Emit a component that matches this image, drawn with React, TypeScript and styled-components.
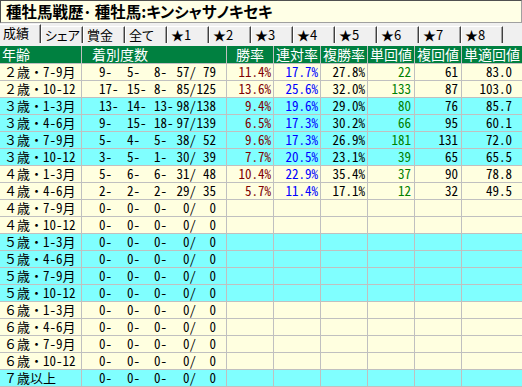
import styled, { createGlobalStyle } from "styled-components";

const GlobalStyle = createGlobalStyle`
  html, body {
    margin: 0;
    padding: 0;
    background: #f0f0f0;
  }
  body {
    font-family: "Noto Sans CJK JP", sans-serif;
    font-size: 13px;
    color: #000;
  }
`;

type Counts = [number, number, number, number, number];

type RowData = {
  age: string;
  period: string;
  counts: Counts;
  win: string;
  place: string;
  show: string;
  winRet: string;
  showRet: string;
  fitRet: string;
  tone: "yellow" | "cyan";
};

const zero: Counts = [0, 0, 0, 0, 0];

const empty = { win: "", place: "", show: "", winRet: "", showRet: "", fitRet: "" };

const rows: RowData[] = [
  { age: "２歳・", period: "7-9月", counts: [9, 5, 8, 57, 79], win: "11.4%", place: "17.7%", show: "27.8%", winRet: "22", showRet: "61", fitRet: "83.0", tone: "yellow" },
  { age: "２歳・", period: "10-12", counts: [17, 15, 8, 85, 125], win: "13.6%", place: "25.6%", show: "32.0%", winRet: "133", showRet: "87", fitRet: "103.0", tone: "yellow" },
  { age: "３歳・", period: "1-3月", counts: [13, 14, 13, 98, 138], win: "9.4%", place: "19.6%", show: "29.0%", winRet: "80", showRet: "76", fitRet: "85.7", tone: "cyan" },
  { age: "３歳・", period: "4-6月", counts: [9, 15, 18, 97, 139], win: "6.5%", place: "17.3%", show: "30.2%", winRet: "66", showRet: "95", fitRet: "60.1", tone: "cyan" },
  { age: "３歳・", period: "7-9月", counts: [5, 4, 5, 38, 52], win: "9.6%", place: "17.3%", show: "26.9%", winRet: "181", showRet: "131", fitRet: "72.0", tone: "cyan" },
  { age: "３歳・", period: "10-12", counts: [3, 5, 1, 30, 39], win: "7.7%", place: "20.5%", show: "23.1%", winRet: "39", showRet: "65", fitRet: "65.5", tone: "cyan" },
  { age: "４歳・", period: "1-3月", counts: [5, 6, 6, 31, 48], win: "10.4%", place: "22.9%", show: "35.4%", winRet: "37", showRet: "90", fitRet: "78.8", tone: "yellow" },
  { age: "４歳・", period: "4-6月", counts: [2, 2, 2, 29, 35], win: "5.7%", place: "11.4%", show: "17.1%", winRet: "12", showRet: "32", fitRet: "49.5", tone: "yellow" },
  { age: "４歳・", period: "7-9月", counts: zero, ...empty, tone: "yellow" },
  { age: "４歳・", period: "10-12", counts: zero, ...empty, tone: "yellow" },
  { age: "５歳・", period: "1-3月", counts: zero, ...empty, tone: "cyan" },
  { age: "５歳・", period: "4-6月", counts: zero, ...empty, tone: "cyan" },
  { age: "５歳・", period: "7-9月", counts: zero, ...empty, tone: "cyan" },
  { age: "５歳・", period: "10-12", counts: zero, ...empty, tone: "cyan" },
  { age: "６歳・", period: "1-3月", counts: zero, ...empty, tone: "yellow" },
  { age: "６歳・", period: "4-6月", counts: zero, ...empty, tone: "yellow" },
  { age: "６歳・", period: "7-9月", counts: zero, ...empty, tone: "yellow" },
  { age: "６歳・", period: "10-12", counts: zero, ...empty, tone: "yellow" },
  { age: "７歳以上", period: "", counts: zero, ...empty, tone: "cyan" },
];

const tabs = ["成績", "シェア", "賞金", "全て", "★1", "★2", "★3", "★4", "★5", "★6", "★7", "★8"];

const tones = {
  yellow: "#ffffe0",
  cyan: "#80ffff",
};

const App = () => {
  return (
    <Page>
      <GlobalStyle />
      <Title>種牡馬戦歴･ 種牡馬:キンシャサノキセキ</Title>
      <TabBar>
        {tabs.map((t, i) => (
          <Tab key={t} $active={i === 0}>
            {t}
          </Tab>
        ))}
      </TabBar>
      <Table>
        <Row>
          <HeadCell $align="left" $pad={2}>年齢</HeadCell>
          <HeadCell $align="left" $pad={10}>着別度数</HeadCell>
          <HeadCell>勝率</HeadCell>
          <HeadCell>連対率</HeadCell>
          <HeadCell>複勝率</HeadCell>
          <HeadCell>単回値</HeadCell>
          <HeadCell>複回値</HeadCell>
          <HeadCell>単適回値</HeadCell>
        </Row>
        {rows.map((r) => (
          <Row key={r.age + r.period}>
            <LabelCell $bg={tones[r.tone]}>
              {r.age}
              <Half>{r.period}</Half>
            </LabelCell>
            <CountCell $bg={tones[r.tone]}>
              <span>{r.counts[0]}-</span>
              <span>{r.counts[1]}-</span>
              <span>{r.counts[2]}-</span>
              <Right>{r.counts[3]}/</Right>
              <Right>{r.counts[4]}</Right>
            </CountCell>
            <NumCell $bg={tones[r.tone]} $color="#800000">{r.win}</NumCell>
            <NumCell $bg={tones[r.tone]} $color="#0000ff">{r.place}</NumCell>
            <NumCell $bg={tones[r.tone]}>{r.show}</NumCell>
            <NumCell $bg={tones[r.tone]} $color="#008000" $pad={3}>{r.winRet}</NumCell>
            <NumCell $bg={tones[r.tone]} $pad={3}>{r.showRet}</NumCell>
            <NumCell $bg={tones[r.tone]} $pad={10}>{r.fitRet}</NumCell>
          </Row>
        ))}
      </Table>
    </Page>
  );
};

const Page = styled.div`
  width: 522px;
  height: 387px;
  overflow: hidden;
`;

const Title = styled.h1`
  box-sizing: border-box;
  margin: 0;
  height: 23px;
  padding-left: 5px;
  border: 1px solid;
  border-color: #505050 #a0a0a0 #a0a0a0 #505050;
  background: #ffffe6;
  font-size: 15.5px;
  font-weight: bold;
  line-height: 21px;
  font-feature-settings: "palt";
  white-space: nowrap;
`;

const TabBar = styled.div`
  display: flex;
  height: 18px;
  margin: 2px 0 3px;
`;

const Tab = styled.div<{ $active?: boolean }>`
  box-sizing: border-box;
  width: 42px;
  height: ${({ $active }) => ($active ? "19px" : "17px")};
  margin-top: ${({ $active }) => ($active ? "-1px" : "1px")};
  padding-left: 3px;
  border-top: 1px solid #fff;
  border-left: 1px solid #fff;
  border-right: 1px solid #404040;
  box-shadow: inset -1px 0 #a0a0a0;
  background: #f0f0f0;
  font-size: 13px;
  line-height: 16px;
  font-feature-settings: "palt";
  white-space: nowrap;

  &:first-child {
    width: 41px;
    border-left: none;
  }
`;

const Table = styled.div`
  display: flex;
  flex-direction: column;
  gap: 1px;
  padding-bottom: 1px;
  background: #c0c0c0;
`;

const Row = styled.div`
  display: grid;
  grid-template-columns: 81px 144px 46px 46px 46px 46px 46px 60px;
  column-gap: 1px;
`;

const HeadCell = styled.div<{ $align?: "left" | "center"; $pad?: number }>`
  height: 17px;
  padding-left: ${({ $pad }) => $pad ?? 0}px;
  background: #008040;
  color: #fff;
  font-size: 14px;
  line-height: 17px;
  text-align: ${({ $align }) => $align ?? "center"};
  white-space: nowrap;
`;

const Cell = styled.div<{ $bg: string }>`
  height: 16px;
  background: ${({ $bg }) => $bg};
  font-size: 13px;
  line-height: 16px;
  white-space: nowrap;
`;

const LabelCell = styled(Cell)`
  padding-left: 4px;
`;

const Half = styled.span`
  font-feature-settings: "hwid";
`;

const CountCell = styled(Cell)`
  display: grid;
  grid-template-columns: 28px 27px 22px 20px 20px;
  padding-left: 17px;
  font-feature-settings: "hwid";
`;

const Right = styled.span`
  text-align: right;
`;

const NumCell = styled(Cell)<{ $color?: string; $pad?: number }>`
  padding-right: ${({ $pad }) => $pad ?? 2}px;
  color: ${({ $color }) => $color ?? "#000"};
  text-align: right;
  font-feature-settings: "hwid";
`;

export default App;
